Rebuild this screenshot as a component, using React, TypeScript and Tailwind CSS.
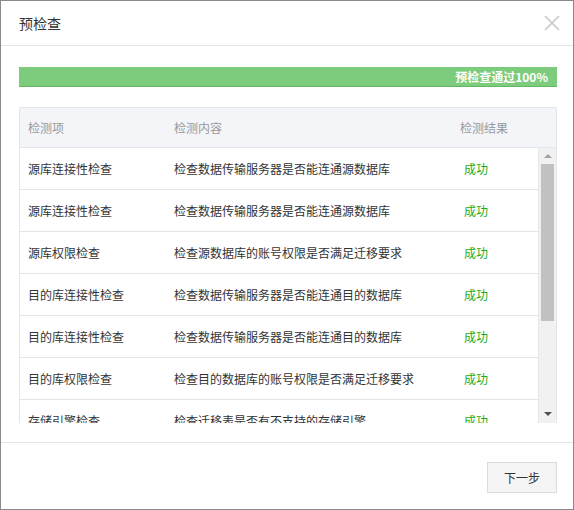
const ROWS = [
  { item: "源库连接性检查", content: "检查数据传输服务器是否能连通源数据库" },
  { item: "源库连接性检查", content: "检查数据传输服务器是否能连通源数据库" },
  { item: "源库权限检查", content: "检查源数据库的账号权限是否满足迁移要求" },
  { item: "目的库连接性检查", content: "检查数据传输服务器是否能连通目的数据库" },
  { item: "目的库连接性检查", content: "检查数据传输服务器是否能连通目的数据库" },
  { item: "目的库权限检查", content: "检查目的数据库的账号权限是否满足迁移要求" },
  { item: "存储引擎检查", content: "检查迁移表是否有不支持的存储引擎" },
];

function CloseIcon() {
  return (
    <svg width="16" height="16" viewBox="0 0 16 16" className="text-[#c8c8c8]">
      <path d="M1 1L15 15M15 1L1 15" stroke="currentColor" strokeWidth="1.6" />
    </svg>
  );
}

function FakeScrollbar() {
  return (
    <div className="flex w-[17px] shrink-0 flex-col items-center bg-[#f1f1f1]">
      <div className="mt-[6px] h-0 w-0 border-x-[4px] border-b-[4px] border-x-transparent border-b-[#a3a3a3]" />
      <div className="mt-[6px] h-[157px] w-[13px] bg-[#c1c1c1]" />
      <div className="mt-auto mb-[7px] h-0 w-0 border-x-[4px] border-t-[4px] border-x-transparent border-t-[#505050]" />
    </div>
  );
}

export default function App() {
  return (
    <div
      className="flex h-[510px] w-[574px] flex-col border border-[#8a8a8a] bg-white text-[12px] text-[#333]"
      style={{ fontFamily: '"Noto Sans CJK SC", "Microsoft YaHei", sans-serif' }}
    >
      {/* header */}
      <div className="flex h-[45px] shrink-0 items-center justify-between border-b border-[#e5e5e5] pl-[18px] pr-[13px]">
        <span className="text-[14px] text-[#333]">预检查</span>
        <CloseIcon />
      </div>

      {/* body */}
      <div className="flex shrink-0 flex-col pl-[18px] pr-[16px] pt-[21px] pb-[19px]">
        <div className="flex h-[20px] shrink-0 items-center justify-end border-b border-[#62b862] bg-[#7dcb7d] pr-[9px] text-[12px] font-bold text-white">
          预检查通过100%
        </div>

        <div className="mt-[20px] flex h-[316px] flex-col overflow-hidden border-x border-t border-[#e3e6eb]">
          <div className="grid h-[40px] shrink-0 grid-cols-[146px_286px_1fr] items-center border-b border-[#e3e6eb] bg-[#f4f5f9] text-[#999]">
            <span className="pl-[8px]">检测项</span>
            <span className="pl-[8px]">检测内容</span>
            <span className="pl-[8px]">检测结果</span>
          </div>
          <div className="flex min-h-0 flex-1 overflow-hidden">
            <div className="min-h-0 flex-1 overflow-hidden border-r border-[#e3e6eb]">
              {ROWS.map((r, i) => (
                <div
                  key={i}
                  className="grid h-[42px] grid-cols-[146px_286px_1fr] items-center border-b border-[#e5e5e5]"
                >
                  <span className="pl-[8px]">{r.item}</span>
                  <span className="pl-[8px]">{r.content}</span>
                  <span className="pl-[12px] text-[#1aad19]">成功</span>
                </div>
              ))}
            </div>
            <FakeScrollbar />
          </div>
        </div>
      </div>

      {/* footer */}
      <div className="flex min-h-0 flex-1 items-start justify-end border-t border-[#e5e5e5] pr-[16px] pt-[19px]">
        <button className="h-[31px] w-[70px] border border-[#dcdcdc] bg-[#f5f5f5] text-[12px] text-[#333]">
          下一步
        </button>
      </div>
    </div>
  );
}
